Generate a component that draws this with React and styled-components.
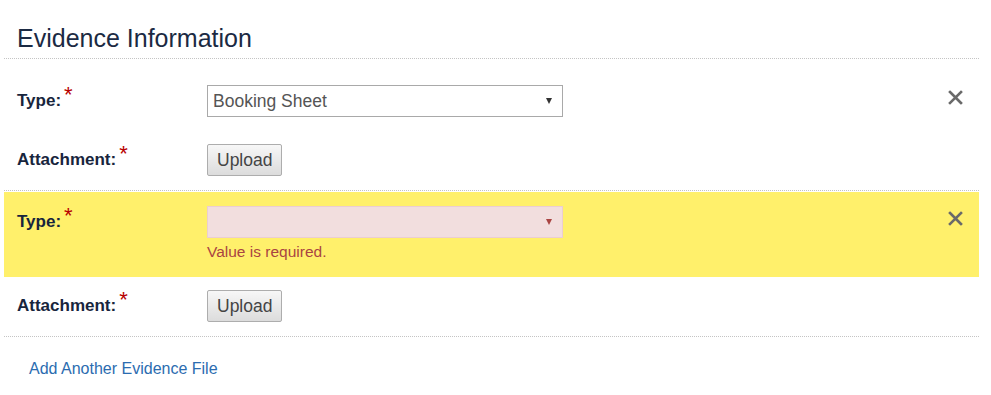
import React from "react";
import styled, { createGlobalStyle, css } from "styled-components";

const GlobalStyle = createGlobalStyle`
  body {
    margin: 0;
    background: #ffffff;
    font-family: "Liberation Sans", Arial, sans-serif;
  }
`;

const items = [
  { id: 1, type: "Booking Sheet", error: false },
  { id: 2, type: "", error: true },
];

const XIcon = () => (
  <svg width="15" height="15" viewBox="0 0 15 15">
    <path
      d="M2 2 L13 13 M13 2 L2 13"
      stroke="#6a6a6a"
      strokeWidth="2.6"
      strokeLinecap="square"
    />
  </svg>
);

const App = () => {
  return (
    <>
      <GlobalStyle />
      <Section>
        <Title>Evidence Information</Title>
        {items.map((item) => (
          <Item key={item.id}>
            <FieldRow $highlight={item.error}>
              <Label>
                Type:<Req>*</Req>
              </Label>
              <Control>
                <SelectWrap $error={item.error}>
                  <Select $error={item.error} value={item.type} onChange={() => {}}>
                    <option value="">{""}</option>
                    <option value="Booking Sheet">Booking Sheet</option>
                  </Select>
                </SelectWrap>
                {item.error && <ErrorText>Value is required.</ErrorText>}
              </Control>
              <RemoveButton aria-label="Remove">
                <XIcon />
              </RemoveButton>
            </FieldRow>
            <FieldRow $attachment>
              <Label>
                Attachment:<Req>*</Req>
              </Label>
              <Control>
                <UploadButton>Upload</UploadButton>
              </Control>
            </FieldRow>
          </Item>
        ))}
        <Footer>
          <AddLink href="#">Add Another Evidence File</AddLink>
        </Footer>
      </Section>
    </>
  );
};

export default App;

const Section = styled.div`
  margin: 0 12px 0 4px;
`;

const Title = styled.h2`
  margin: 23px 0 11px;
  padding: 0 0 5px 13px;
  font-size: 25px;
  line-height: 30px;
  font-weight: normal;
  color: #1b2a43;
  border-bottom: 1px dotted #c4c4c4;
`;

const Item = styled.div`
  padding-top: 1px;
  border-bottom: 1px dotted #c4c4c4;
`;

const FieldRow = styled.div`
  display: grid;
  grid-template-columns: 190px 1fr auto;
  align-items: start;
  padding: 14px 16px 14px 13px;
  background: ${(p) => (p.$highlight ? "#fff06b" : "transparent")};
  ${(p) =>
    p.$highlight &&
    css`
      padding-bottom: 15px;
    `}
  ${(p) =>
    p.$attachment &&
    css`
      padding-top: 13px;
    `}
`;

const Label = styled.div`
  padding-top: 2px;
  font-size: 17px;
  line-height: 24px;
  font-weight: bold;
  color: #18253d;
`;

const Req = styled.span`
  position: relative;
  top: -4px;
  margin-left: 3px;
  font-size: 22px;
  font-weight: normal;
  color: #b80000;
`;

const Control = styled.div`
  display: flex;
  flex-direction: column;
  align-items: flex-start;
`;

const SelectWrap = styled.div`
  position: relative;
  width: 356px;

  &::after {
    content: "";
    position: absolute;
    right: 11px;
    top: 13px;
    border-left: 3px solid transparent;
    border-right: 3px solid transparent;
    border-top: 6px solid ${(p) => (p.$error ? "#a94442" : "#333333")};
    pointer-events: none;
  }
`;

const Select = styled.select`
  appearance: none;
  -webkit-appearance: none;
  display: block;
  width: 100%;
  height: 32px;
  margin: 0;
  padding: 0 24px 0 5px;
  font-family: "Liberation Sans", Arial, sans-serif;
  font-size: 17.5px;
  color: #555555;
  background: ${(p) => (p.$error ? "#f2dede" : "#ffffff")};
  border: 1px solid ${(p) => (p.$error ? "#ebcdd2" : "#a9a9a9")};
  border-radius: 0;
  outline: none;
`;

const ErrorText = styled.div`
  margin-top: 4px;
  font-size: 15.5px;
  line-height: 20px;
  color: #a94442;
`;

const RemoveButton = styled.button`
  display: flex;
  margin: 5px 0 0;
  padding: 0;
  border: none;
  background: none;
  cursor: pointer;
`;

const UploadButton = styled.button`
  height: 32px;
  padding: 0 9px;
  font-family: "Liberation Sans", Arial, sans-serif;
  font-size: 17.5px;
  color: #444444;
  background: linear-gradient(#f7f7f7, #dcdcdc);
  border: 1px solid #adadad;
  border-radius: 2px;
  cursor: pointer;
`;

const Footer = styled.div`
  padding: 22px 0 0 25px;
  line-height: 20px;
`;

const AddLink = styled.a`
  font-size: 16px;
  color: #2b6cb0;
  text-decoration: none;
`;
